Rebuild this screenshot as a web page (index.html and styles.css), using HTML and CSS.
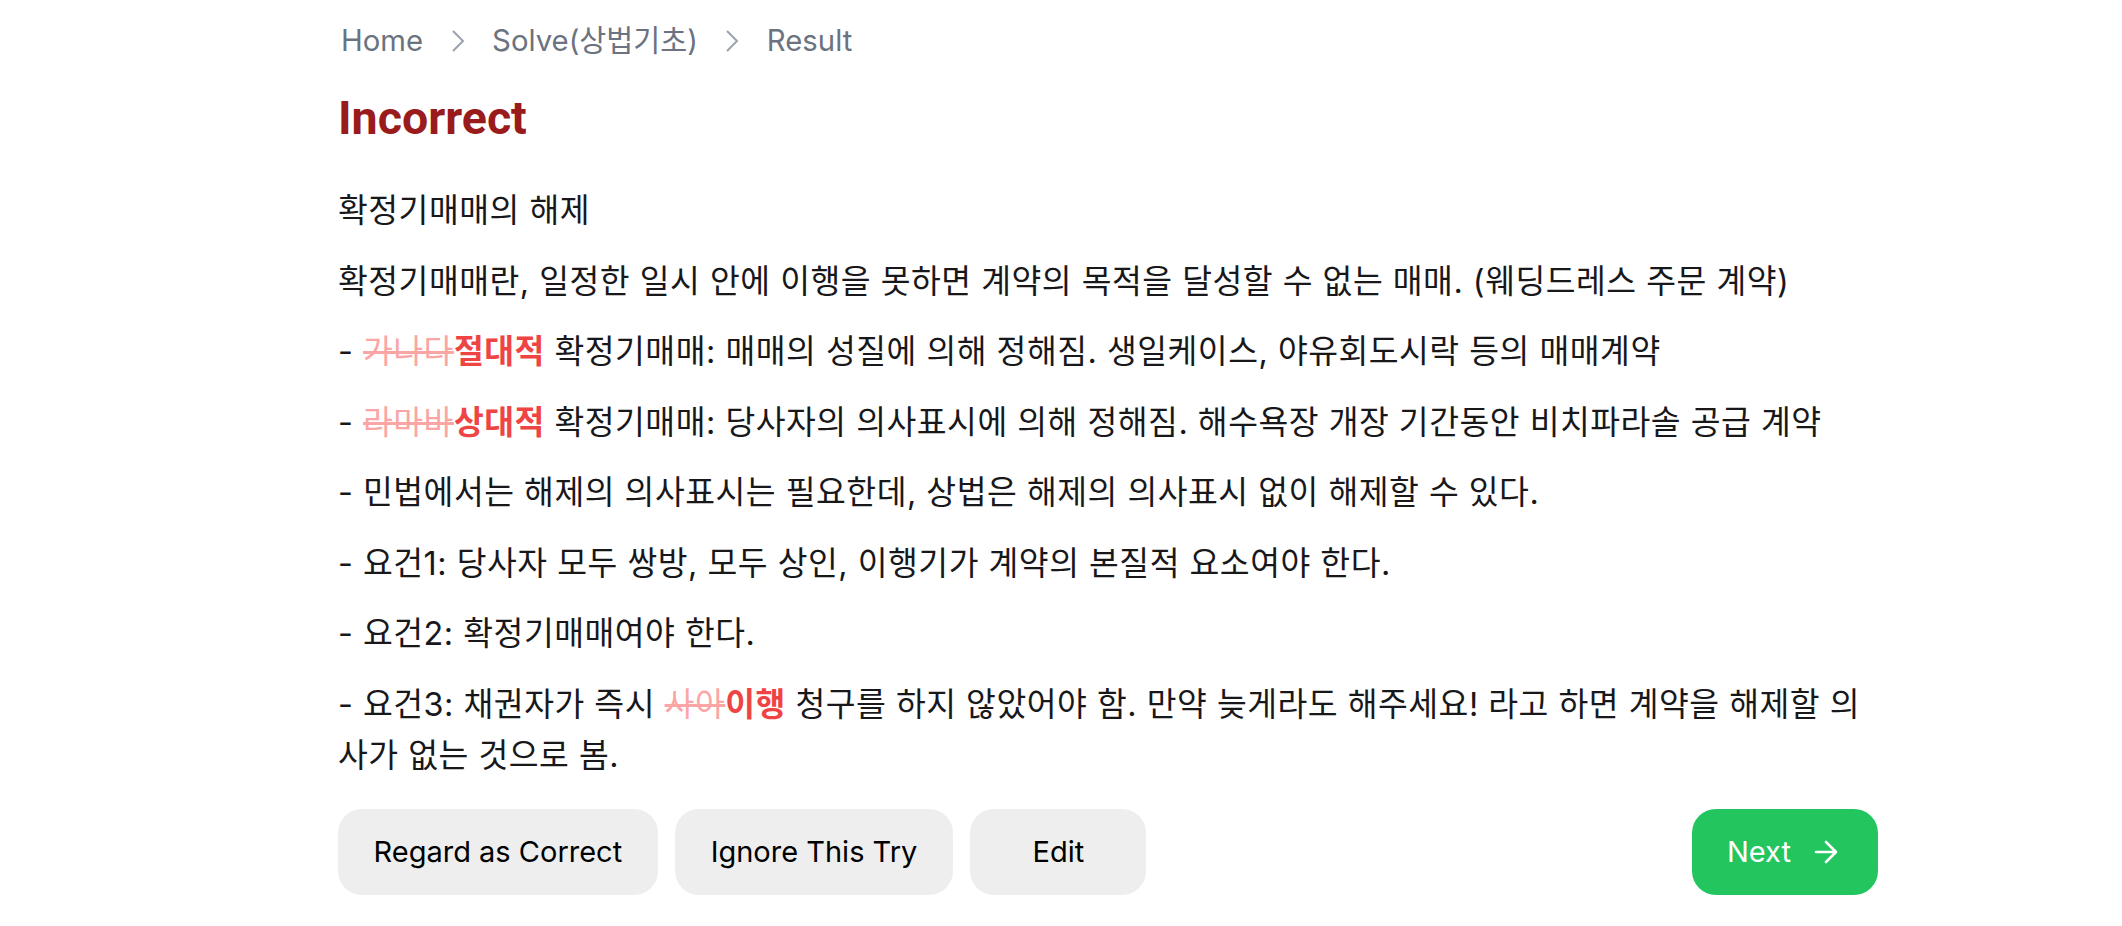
FILE: index.html
```html
<!DOCTYPE html>
<html lang="ko">
<head>
<meta charset="utf-8">
<title>Result</title>
<link rel="stylesheet" href="styles.css">
</head>
<body>
<main class="page">
  <nav class="crumbs">
    <span class="crumb">Home</span>
    <svg class="chev" viewBox="0 0 14 22" width="14" height="22"><path d="M2 1 L12 11 L2 21" fill="none" stroke="#9ca3af" stroke-width="2"/></svg>
    <span class="crumb">Solve(상법기초)</span>
    <svg class="chev" viewBox="0 0 14 22" width="14" height="22"><path d="M2 1 L12 11 L2 21" fill="none" stroke="#9ca3af" stroke-width="2"/></svg>
    <span class="crumb">Result</span>
  </nav>

  <h1 class="verdict">Incorrect</h1>

  <section class="note">
    <p>확정기매매의 해제</p>
    <p>확정기매매란, 일정한 일시 안에 이행을 못하면 계약의 목적을 달성할 수 없는 매매. (웨딩드레스 주문 계약)</p>
    <p>- <del class="wrong">가나다</del><strong class="fix">절대적</strong> 확정기매매: 매매의 성질에 의해 정해짐. 생일케이스, 야유회도시락 등의 매매계약</p>
    <p>- <del class="wrong">라마바</del><strong class="fix">상대적</strong> 확정기매매: 당사자의 의사표시에 의해 정해짐. 해수욕장 개장 기간동안 비치파라솔 공급 계약</p>
    <p>- 민법에서는 해제의 의사표시는 필요한데, 상법은 해제의 의사표시 없이 해제할 수 있다.</p>
    <p>- 요건1: 당사자 모두 쌍방, 모두 상인, 이행기가 계약의 본질적 요소여야 한다.</p>
    <p>- 요건2: 확정기매매여야 한다.</p>
    <p>- 요건3: 채권자가 즉시 <del class="wrong">사아</del><strong class="fix">이행</strong> 청구를 하지 않았어야 함. 만약 늦게라도 해주세요! 라고 하면 계약을 해제할 의사가 없는 것으로 봄.</p>
  </section>

  <div class="actions">
    <button class="btn">Regard as Correct</button>
    <button class="btn">Ignore This Try</button>
    <button class="btn btn-edit">Edit</button>
    <button class="btn btn-next">Next
      <svg class="arrow" viewBox="0 0 24 24" width="24" height="24"><path d="M2 12 H21 M12 2 L22 12 L12 22" fill="none" stroke="#fff" stroke-width="2.6" stroke-linecap="round" stroke-linejoin="round"/></svg>
    </button>
  </div>
</main>
</body>
</html>
```

FILE: styles.css
```css
html, body {
  margin: 0;
  padding: 0;
  background: #ffffff;
}

body {
  font-family: "Inter", "Noto Sans CJK KR", sans-serif;
  color: #18181b;
}

.page {
  width: 1540px;
  margin-left: 338px;
  padding-top: 19px;
}

.crumbs {
  display: flex;
  align-items: center;
  gap: 27.5px;
  height: 43px;
  padding-left: 3px;
}

.crumb {
  font-size: 29.3px;
  line-height: 43px;
  color: #6b7280;
}

.chev {
  display: block;
}

.verdict {
  margin: 27px 0 0 0;
  font-family: "Roboto", "Inter", sans-serif;
  font-weight: 700;
  font-size: 46.5px;
  line-height: 58px;
  color: #991b1b;
}

.note {
  margin-top: 38px;
  font-family: "Inter", "Noto Sans CJK KR", sans-serif;
  font-size: 32.4px;
  letter-spacing: 0.5px;
  line-height: 51px;
}

.note p {
  margin: 0 0 19.5px 0;
}

.note p:last-child {
  margin-bottom: 0;
}

.wrong {
  color: #fca5a5;
  text-decoration: line-through;
}

.fix {
  color: #ef4444;
  font-weight: 700;
}

.actions {
  display: flex;
  gap: 17.5px;
  margin-top: 28px;
}

.btn {
  height: 86px;
  padding: 0 35.5px;
  border: none;
  border-radius: 24px;
  background: #eeeeee;
  color: #000000;
  font-family: "Inter", sans-serif;
  font-size: 29px;
  cursor: pointer;
}

.btn-edit {
  min-width: 176px;
}

.btn-next {
  margin-left: auto;
  display: flex;
  align-items: center;
  gap: 23px;
  padding: 0 40px 0 35px;
  background: #22c55e;
  color: #ffffff;
}

.arrow {
  display: block;
}
```
